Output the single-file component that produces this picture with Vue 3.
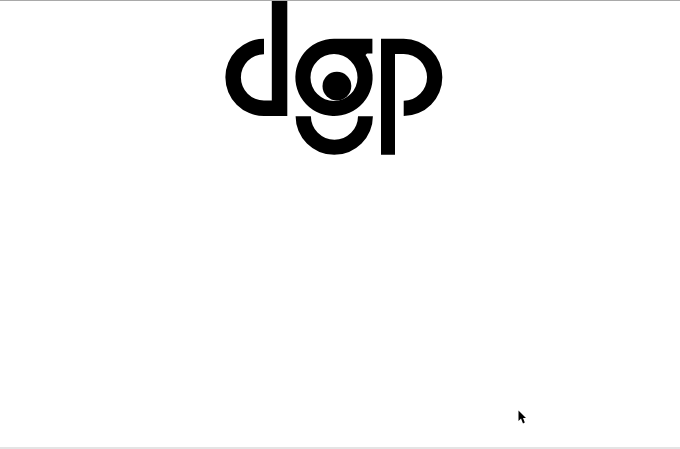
<script setup>
</script>

<template>
  <main class="page">
    <svg class="logo" width="220" height="156" viewBox="225 0 220 156" role="img" aria-label="dgp logo">
      <path d="M271.8 0H287.3V116H264A38.65 38.65 0 0 1 264 38.7V54.3A23.1 23.1 0 0 0 264 100.5H271.8Z" />
      <path fill-rule="evenodd" d="M334 38.7H372.4V53.6H367L365.53 55A38.65 38.65 0 1 1 334 38.7ZM334 54A23.5 23.5 0 1 0 334 101A23.5 23.5 0 1 0 334 54Z" />
      <path d="M336.9 71.7A14.4 14.4 0 1 1 336.9 100.5A14.4 14.4 0 1 1 336.9 71.7Z" />
      <path d="M295.6 116.2H310.9A23.55 23.55 0 0 0 358 116.2H372.9A38.65 38.65 0 0 1 295.6 116.2Z" />
      <path d="M381 38.7H403.7A38.65 38.65 0 0 1 403.7 116V100.7A23.35 23.35 0 0 0 403.7 54H395V154.7H381Z" />
    </svg>
    <svg class="cursor" width="10" height="15" viewBox="0 0 10 15" aria-hidden="true">
      <path d="M0.5 0.5V11L3 8.6L5 13.5L6.8 12.6L5 8H8Z" />
    </svg>
  </main>
</template>

<style scoped>
.page {
  position: relative;
  box-sizing: border-box;
  width: 680px;
  height: 449px;
  background: #fff;
  border-top: 1px solid #a9a9a9;
  border-bottom: 2px solid #e4e4e4;
  overflow: hidden;
}
.logo {
  display: block;
  margin: -1px 0 0 225px;
  position: relative;
}
.cursor {
  position: absolute;
  left: 518px;
  top: 409px;
}
</style>

<style>
html, body { margin: 0; background: #fff; }
</style>
